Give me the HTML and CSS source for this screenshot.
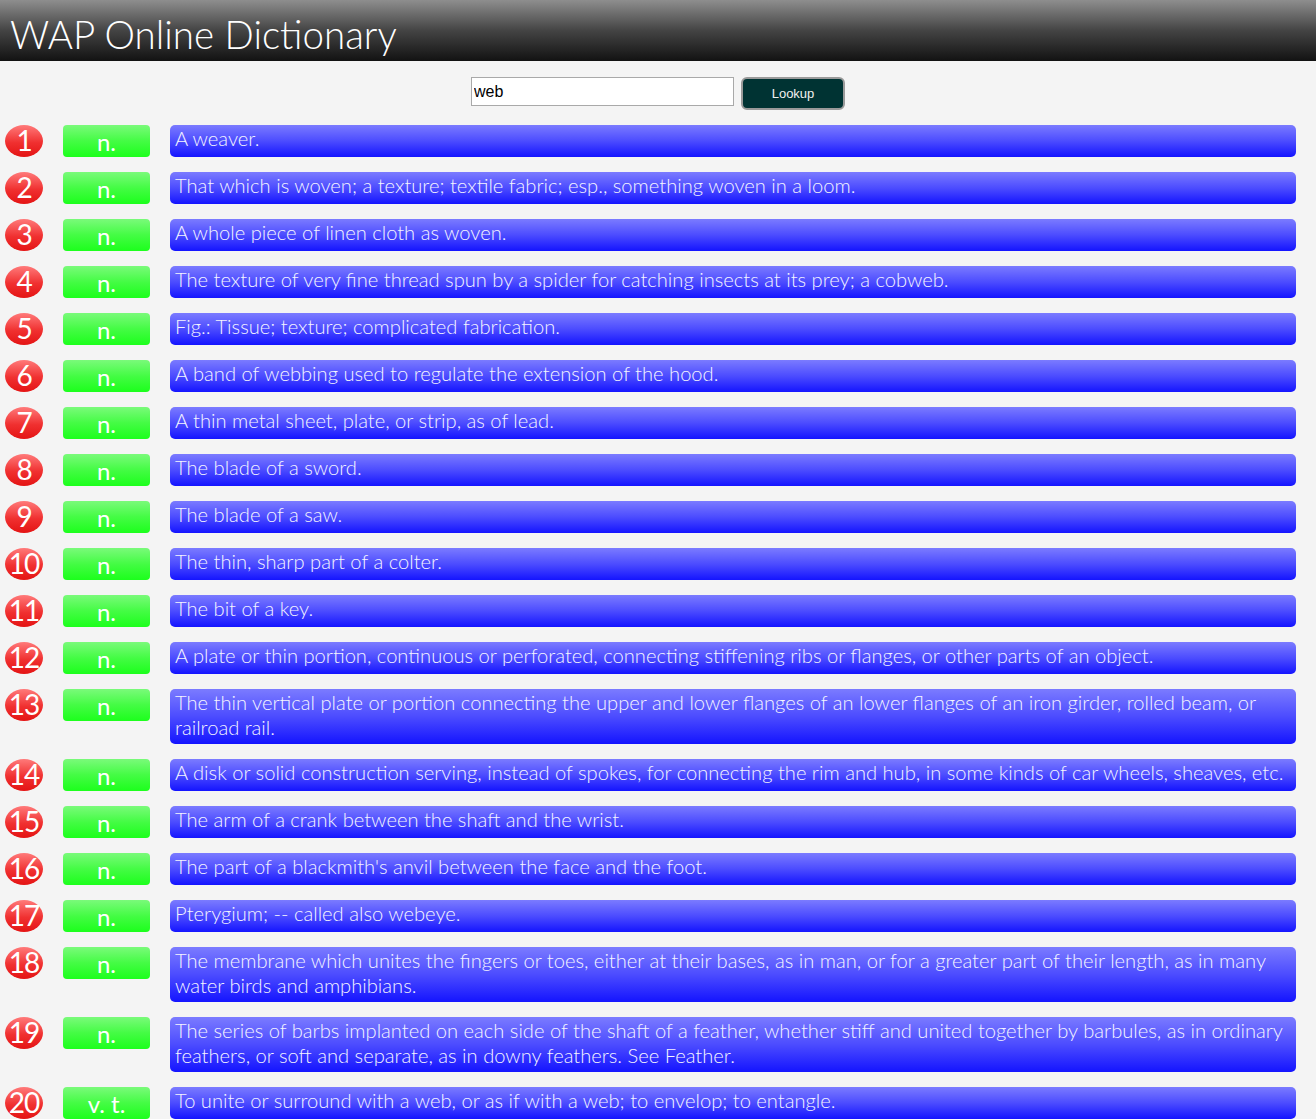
FILE: index.html
```html
<!DOCTYPE html>
<html>
<head>
<meta charset="utf-8">
<link rel="stylesheet" href="styles.css">
</head>
<body>
<header class="topbar"><h1 class="title">WAP Online Dictionary</h1></header>
<form class="search">
  <input class="search-input" type="text" value="web">
  <button class="search-btn" type="button">Lookup</button>
</form>
<div class="list">
  <div class="num">1</div><div class="pos">n.</div><div class="def">A weaver.</div>
  <div class="num">2</div><div class="pos">n.</div><div class="def">That which is woven; a texture; textile fabric; esp., something woven in a loom.</div>
  <div class="num">3</div><div class="pos">n.</div><div class="def">A whole piece of linen cloth as woven.</div>
  <div class="num">4</div><div class="pos">n.</div><div class="def">The texture of very fine thread spun by a spider for catching insects at its prey; a cobweb.</div>
  <div class="num">5</div><div class="pos">n.</div><div class="def">Fig.: Tissue; texture; complicated fabrication.</div>
  <div class="num">6</div><div class="pos">n.</div><div class="def">A band of webbing used to regulate the extension of the hood.</div>
  <div class="num">7</div><div class="pos">n.</div><div class="def">A thin metal sheet, plate, or strip, as of lead.</div>
  <div class="num">8</div><div class="pos">n.</div><div class="def">The blade of a sword.</div>
  <div class="num">9</div><div class="pos">n.</div><div class="def">The blade of a saw.</div>
  <div class="num">10</div><div class="pos">n.</div><div class="def">The thin, sharp part of a colter.</div>
  <div class="num">11</div><div class="pos">n.</div><div class="def">The bit of a key.</div>
  <div class="num">12</div><div class="pos">n.</div><div class="def">A plate or thin portion, continuous or perforated, connecting stiffening ribs or flanges, or other parts of an object.</div>
  <div class="num">13</div><div class="pos">n.</div><div class="def">The thin vertical plate or portion connecting the upper and lower flanges of an lower flanges of an iron girder, rolled beam, or railroad rail.</div>
  <div class="num">14</div><div class="pos">n.</div><div class="def">A disk or solid construction serving, instead of spokes, for connecting the rim and hub, in some kinds of car wheels, sheaves, etc.</div>
  <div class="num">15</div><div class="pos">n.</div><div class="def">The arm of a crank between the shaft and the wrist.</div>
  <div class="num">16</div><div class="pos">n.</div><div class="def">The part of a blackmith's anvil between the face and the foot.</div>
  <div class="num">17</div><div class="pos">n.</div><div class="def">Pterygium; -- called also webeye.</div>
  <div class="num">18</div><div class="pos">n.</div><div class="def">The membrane which unites the fingers or toes, either at their bases, as in man, or for a greater part of their length, as in many water birds and amphibians.</div>
  <div class="num">19</div><div class="pos">n.</div><div class="def">The series of barbs implanted on each side of the shaft of a feather, whether stiff and united together by barbules, as in ordinary feathers, or soft and separate, as in downy feathers. See Feather.</div>
  <div class="num">20</div><div class="pos">v. t.</div><div class="def">To unite or surround with a web, or as if with a web; to envelop; to entangle.</div>
</div>
</body>
</html>
```
FILE: styles.css
```css
html, body {
  margin: 0;
  padding: 0;
  background: #f4f4f4;
  font-family: Lato, "Liberation Sans", sans-serif;
}

.topbar {
  height: 61px;
  background: linear-gradient(to bottom, #8e8e8e 0%, #444 50%, #121212 100%);
  overflow: hidden;
}

.title {
  margin: 0;
  padding: 10px 0 0 10px;
  font-family: Lato, sans-serif;
  font-weight: 300;
  font-size: 38.5px;
  line-height: 48px;
  color: #ffffff;
}

.search {
  display: flex;
  justify-content: center;
  align-items: flex-start;
  gap: 7px;
  margin: 16px 0 16px 0;
  height: 32px;
}

.search-input {
  box-sizing: border-box;
  width: 263px;
  height: 29px;
  margin: 0;
  padding: 0 2px;
  border: 1px solid #a9a9a9;
  background: #fff;
  font-family: "Liberation Sans", Arial, sans-serif;
  font-size: 16px;
  color: #000;
  outline: none;
}

.search-btn {
  box-sizing: border-box;
  width: 104px;
  height: 33px;
  margin: 0;
  border: 2px solid #9a9a9a;
  border-radius: 6px;
  background: #003333;
  color: #f0f0f0;
  font-family: "Liberation Sans", Arial, sans-serif;
  font-size: 13px;
}

.list {
  display: grid;
  grid-template-columns: 38px 87px 1126px;
  column-gap: 20px;
  row-gap: 15px;
  padding: 0 0 0 5px;
  align-items: start;
}

.num {
  height: 32px;
  border-radius: 50%;
  background: linear-gradient(to bottom, #ff7a7a 0%, #f03030 55%, #e41414 100%);
  color: #fff;
  font-family: Lato, sans-serif;
  font-size: 28px;
  line-height: 30px;
  text-align: center;
  letter-spacing: -1px;
}

.pos {
  height: 32px;
  border-radius: 4px;
  background: linear-gradient(to bottom, #7afa7a 0%, #44fc44 50%, #1cff1c 100%);
  color: #fff;
  font-family: Lato, sans-serif;
  font-size: 24px;
  line-height: 33px;
  text-align: center;
}

.def {
  min-height: 32px;
  box-sizing: border-box;
  padding: 1px 5px 4px 5px;
  border-radius: 5px;
  background: linear-gradient(to bottom, #7b7bff 0%, #4c4cff 50%, #1414ff 100%);
  color: #f4f4ff;
  font-family: Lato, sans-serif;
  font-weight: 300;
  font-size: 20.15px;
  line-height: 25px;
}
```
